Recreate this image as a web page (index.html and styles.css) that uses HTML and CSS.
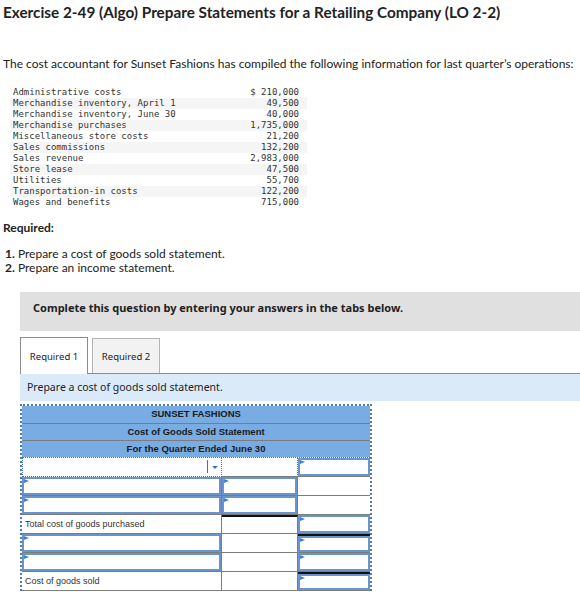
FILE: index.html
```html
<!DOCTYPE html>
<html>
<head>
<meta charset="utf-8">
<link rel="stylesheet" href="styles.css">
</head>
<body>
<h1 class="title">Exercise 2-49 (Algo) Prepare Statements for a Retailing Company (LO 2-2)</h1>
<p class="intro">The cost accountant for Sunset Fashions has compiled the following information for last quarter’s operations:</p>
<div class="data">
  <div class="drow"><span>Administrative costs</span><span>$ 210,000</span></div>
  <div class="drow alt"><span>Merchandise inventory, April 1</span><span>49,500</span></div>
  <div class="drow"><span>Merchandise inventory, June 30</span><span>40,000</span></div>
  <div class="drow alt"><span>Merchandise purchases</span><span>1,735,000</span></div>
  <div class="drow"><span>Miscellaneous store costs</span><span>21,200</span></div>
  <div class="drow alt"><span>Sales commissions</span><span>132,200</span></div>
  <div class="drow"><span>Sales revenue</span><span>2,983,000</span></div>
  <div class="drow alt"><span>Store lease</span><span>47,500</span></div>
  <div class="drow"><span>Utilities</span><span>55,700</span></div>
  <div class="drow alt"><span>Transportation-in costs</span><span>122,200</span></div>
  <div class="drow"><span>Wages and benefits</span><span>715,000</span></div>
</div>
<p class="required">Required:</p>
<ol class="reqlist">
  <li><b>1.</b> Prepare a cost of goods sold statement.</li>
  <li><b>2.</b> Prepare an income statement.</li>
</ol>
<div class="notice">Complete this question by entering your answers in the tabs below.</div>
<div class="tabs">
  <div class="tab active">Required 1</div>
  <div class="tab">Required 2</div>
</div>
<div class="instr">Prepare a cost of goods sold statement.</div>
<div class="sheet">
  <div class="hdr h1">SUNSET FASHIONS</div>
  <div class="hdr">Cost of Goods Sold Statement</div>
  <div class="hdr">For the Quarter Ended June 30</div>
  <div class="grid">
    <div class="c sel"><span class="selbtn"><span class="caret"></span></span></div>
    <div class="c first2"></div>
    <div class="c"><div class="inp"></div></div>

    <div class="c"><div class="inp"></div></div>
    <div class="c"><div class="inp"></div></div>
    <div class="c"></div>

    <div class="c"><div class="inp"></div></div>
    <div class="c"><div class="inp"></div></div>
    <div class="c"></div>

    <div class="c lbl">Total cost of goods purchased</div>
    <div class="c top"></div>
    <div class="c"><div class="inp"></div></div>

    <div class="c"><div class="inp"></div></div>
    <div class="c"></div>
    <div class="c top"><div class="inp"></div></div>

    <div class="c"><div class="inp"></div></div>
    <div class="c"></div>
    <div class="c"><div class="inp"></div></div>

    <div class="c lbl">Cost of goods sold</div>
    <div class="c"></div>
    <div class="c top"><div class="inp"></div></div>
  </div>
</div>
</body>
</html>
```
FILE: styles.css
```css
* { box-sizing: border-box; }
body {
  margin: 0;
  font-family: Lato, "Open Sans", sans-serif;
  color: #222;
  background: #fff;
  width: 580px;
  overflow: hidden;
}
.title {
  margin: 0;
  padding: 3px 0 0 3px;
  font-size: 15.3px;
  line-height: 18px;
  font-weight: 700;
}
.intro {
  margin: 35px 0 0 3px;
  font-size: 12px;
  line-height: 16px;
}
.data {
  margin: 15px 0 0 10px;
  width: 297px;
  font-family: "DejaVu Sans Mono", monospace;
  font-size: 9px;
  color: #333;
}
.drow {
  display: flex;
  justify-content: space-between;
  height: 11px;
  line-height: 11px;
  padding: 0 8px 0 3px;
}
.drow.alt { background: #f5f5f5; }
.required {
  margin: 13px 0 0 3px;
  font-size: 12px;
  line-height: 14px;
  font-weight: 700;
}
.reqlist {
  list-style: none;
  margin: 12px 0 0 5px;
  padding: 0;
  font-size: 12px;
  line-height: 14px;
}
.notice {
  margin: 17px 0 0 20px;
  height: 39px;
  background: #e0e0e0;
  font-family: "Noto Sans", sans-serif;
  font-size: 11px;
  font-weight: 700;
  color: #222;
  padding: 8px 0 0 13px;
}
.tabs {
  display: flex;
  gap: 4px;
  margin: 6px 0 0 20px;
  border-bottom: 1px solid #8c8c8c;
  height: 37px;
  font-family: "Noto Sans", sans-serif;
  font-size: 9.5px;
}
.tab {
  width: 68px;
  border: 1px solid #b4b4b4;
  border-bottom: none;
  background: #f2f2f2;
  display: flex;
  align-items: center;
  justify-content: center;
  margin-top: 1px;
}
.tab.active {
  background: #fff;
  border-color: #8c8c8c;
  margin-top: 0;
  margin-bottom: -1px;
}
.instr {
  margin-left: 20px;
  height: 27px;
  background: #dbeaf8;
  font-family: "Noto Sans", sans-serif;
  font-size: 10.5px;
  line-height: 27px;
  padding-left: 7px;
}
.sheet {
  margin: 3px 0 0 20px;
  width: 352px;
  border: 2px dotted #4f78ad;
  border-bottom: none;
  font-family: "Liberation Sans", Arial, sans-serif;
}
.hdr {
  background: #78ace3;
  text-align: center;
  font-size: 9.5px;
  font-weight: 700;
  color: #1a1a1a;
  height: 17px;
  line-height: 16px;
  border-top: 1px solid #7c7c7c;
}
.hdr.h1 { border-top: none; height: 17px; }
.grid {
  display: grid;
  grid-template-columns: 200px 76px 72px;
  grid-auto-rows: 19px;
  border-top: 1px dotted #3d74c1;
}
.c {
  position: relative;
  border-right: 1px solid #7c7c7c;
  border-bottom: 1px solid #7c7c7c;
  background: #fff;
  padding: 0;
}
.c:nth-child(3n) { border-right: none; }
.c.top { border-top: 2px solid #111; }
.c.lbl {
  font-size: 9px;
  color: #333;
  line-height: 18px;
  padding-left: 3px;
}
.c.sel {
  border: 1px dotted #3d74c1;
  border-top: none;
}
.c.first2 { border-right: 1px dotted #3d74c1; }
.selbtn {
  position: absolute;
  right: 0;
  top: 2px;
  bottom: 3px;
  width: 14px;
  border-left: 1px solid #3d74c1;
}
.caret {
  position: absolute;
  left: 4px;
  top: 6px;
  width: 0;
  height: 0;
  border-left: 3px solid transparent;
  border-right: 3px solid transparent;
  border-top: 3px solid #3d74c1;
}
.inp {
  position: absolute;
  inset: 0 0 0 0;
  border: 2px solid #6994cc;
  background: #fff;
}
.inp::before {
  content: "";
  position: absolute;
  left: 0;
  top: 0;
  border-top: 2px solid transparent;
  border-bottom: 2px solid transparent;
  border-left: 5px solid #3f7fd0;
}
```
